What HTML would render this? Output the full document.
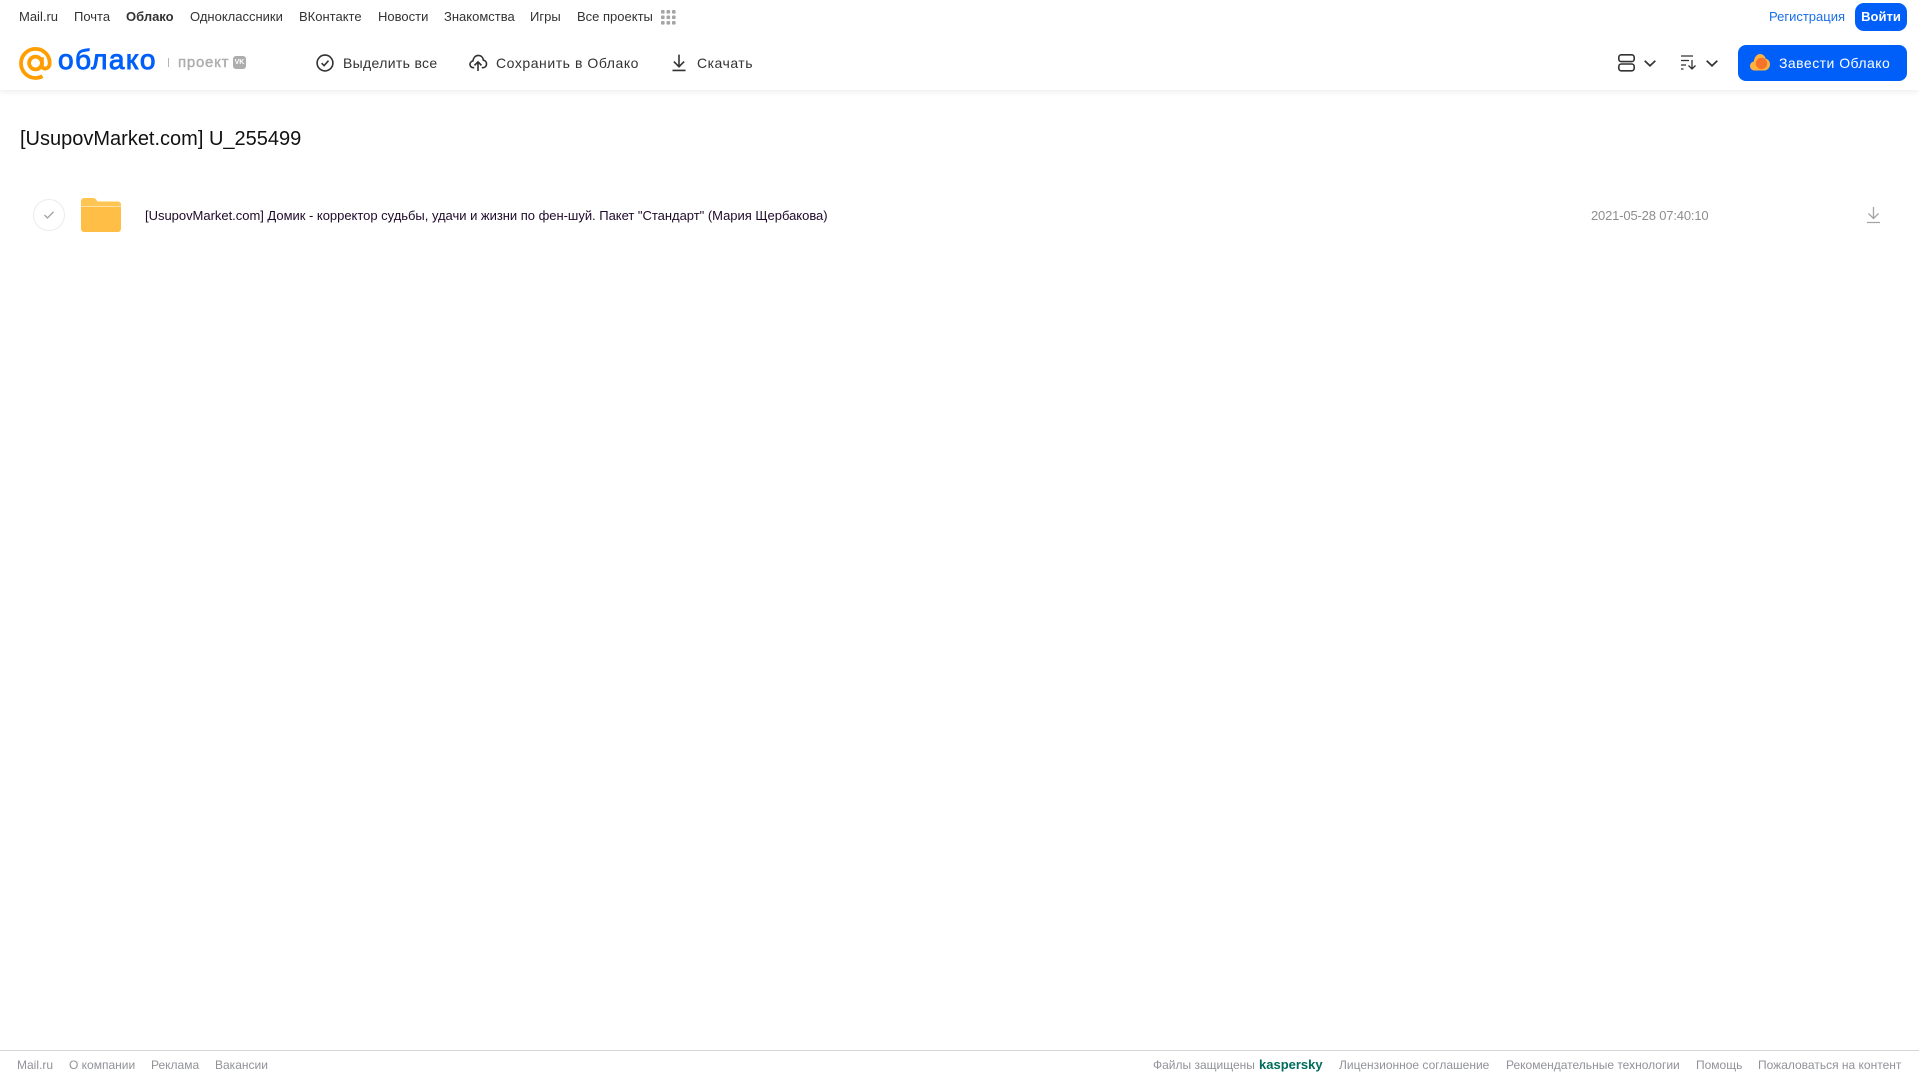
<!DOCTYPE html>
<html lang="ru"><head><meta charset="utf-8"><title>Облако</title>
<style>
html,body{margin:0;padding:0;background:#fff;width:1919px;height:1079px;overflow:hidden;font-family:"Liberation Sans",sans-serif}
.t{position:absolute;white-space:nowrap;line-height:18px}
.n{top:8px;font-size:13px;color:#333}
.h{top:54px;font-size:14px;color:#333;letter-spacing:.55px;line-height:18px}
.f{top:1056px;font-size:12px;color:#919399}
svg{position:absolute;overflow:visible}
#hdr{position:absolute;left:0;top:0;width:1919px;height:90px;background:#fff;box-shadow:0 1px 6px rgba(0,0,0,.09)}
</style></head><body>
<div id="hdr"></div>
<span class="t n" style="left:19px">Mail.ru</span>
<span class="t n" style="left:74px">Почта</span>
<span class="t n" style="left:126px;font-weight:bold">Облако</span>
<span class="t n" style="left:190px">Одноклассники</span>
<span class="t n" style="left:299px">ВКонтакте</span>
<span class="t n" style="left:378px">Новости</span>
<span class="t n" style="left:444px">Знакомства</span>
<span class="t n" style="left:530px">Игры</span>
<span class="t n" style="left:577px">Все проекты</span>
<svg style="left:661px;top:10px" width="15" height="15" fill="#a5a5a5"><rect x="0" y="0" width="3.6" height="3.6" rx="1"/><rect x="5.5" y="0" width="3.6" height="3.6" rx="1"/><rect x="11" y="0" width="3.6" height="3.6" rx="1"/><rect x="0" y="5.5" width="3.6" height="3.6" rx="1"/><rect x="5.5" y="5.5" width="3.6" height="3.6" rx="1"/><rect x="11" y="5.5" width="3.6" height="3.6" rx="1"/><rect x="0" y="11" width="3.6" height="3.6" rx="1"/><rect x="5.5" y="11" width="3.6" height="3.6" rx="1"/><rect x="11" y="11" width="3.6" height="3.6" rx="1"/></svg>
<span class="t" style="left:1769px;top:8px;font-size:13px;color:#1a6fe8">Регистрация</span>
<div style="position:absolute;left:1855px;top:3px;width:52px;height:28px;border-radius:9px;background:#005ff9;color:#fff;font-size:13px;font-weight:bold;text-align:center;line-height:28px">Войти</div>

<svg style="left:19px;top:47px" width="33" height="33" viewBox="0 0 33 33" fill="none" stroke="#ff9e00" stroke-width="3.8"><circle cx="16.5" cy="16" r="6.4"/><path d="M22.9 10.2v8.3c0 4.4 7.8 4.4 7.8-2.5C30.700 8 24.300 1.900 16.500 1.900 8.500 1.900 2 8.300 2 16.300c0 8.200 6.500 14.700 14.500 14.700 2.600 0 4.900-.6 7-1.800"/></svg>
<span class="t" style="left:58px;top:41px;font-size:28px;line-height:38px;color:#005ff9;-webkit-text-stroke:.9px #005ff9;letter-spacing:1.4px">облако</span>
<div style="position:absolute;left:168px;top:58px;width:1px;height:9px;background:#b5b5b5"></div>
<span class="t" style="left:178px;top:54px;font-size:15px;color:#adadad;-webkit-text-stroke:.4px #adadad;letter-spacing:.75px">проект</span>
<div style="position:absolute;left:233px;top:56px;width:13px;height:13px;border-radius:3px;background:#adadad;color:#fff;font-size:7px;font-weight:bold;line-height:13px;text-align:center">VK</div>

<svg style="left:316px;top:54px" width="18" height="18" viewBox="0 0 18 18" fill="none" stroke="#333" stroke-width="1.6"><circle cx="9" cy="9" r="7.9"/><path d="M5.600 9.200l2.500 2.400 4.400-4.900"/></svg>
<span class="t h" style="left:343px;letter-spacing:.33px">Выделить все</span>
<svg style="left:469px;top:54px" width="18" height="18" viewBox="0 0 19 18" fill="none" stroke="#333" stroke-width="1.7"><path d="M5.500 14H4.700C2.600 14 1 12.400 1 10.500 1 8.700 2.300 7.300 4 7 4.600 3.800 6.500 1 9.800 1c3 0 5 2.200 5.400 5 2 .3 3.300 2 3.300 4 0 2.200-1.600 4-3.800 4h-1.200"/><path d="M9.500 17.500V8M5.800 11.500l3.700-3.700 3.700 3.700"/></svg>
<span class="t h" style="left:496px">Сохранить в Облако</span>
<svg style="left:672px;top:54px" width="14" height="18" viewBox="0 0 15 18" fill="none" stroke="#333" stroke-width="1.700"><path d="M7.500 0v12.500M2 7.500l5.500 5.500L13 7.500M.5 17h14"/></svg>
<span class="t h" style="left:697px;letter-spacing:.5px">Скачать</span>

<svg style="left:1618px;top:54px" width="17" height="18" viewBox="0 0 17 18" fill="none" stroke="#333" stroke-width="1.600"><rect x=".8" y=".8" width="15.400" height="6.800" rx="2.500"/><rect x=".8" y="10" width="15.400" height="6.800" rx="2.500"/></svg>
<svg style="left:1644px;top:60px" width="12" height="7" fill="none" stroke="#333" stroke-width="1.700"><path d="M.7.800L6 5.800l5.300-5"/></svg>
<svg style="left:1681px;top:55px" width="16" height="15" viewBox="0 0 16 15" fill="none" stroke="#333" stroke-width="1.300"><path d="M0 1h12M0 5.500h8M0 10h5M0 14h2.500M11 5v9M7.500 10.500l3.500 3.500 3.500-3.500"/></svg>
<svg style="left:1706px;top:60px" width="12" height="7" fill="none" stroke="#333" stroke-width="1.700"><path d="M.7.800L6 5.800l5.300-5"/></svg>
<div style="position:absolute;left:1738px;top:45px;width:169px;height:36px;border-radius:8px;background:#005ff9"></div>
<svg style="left:1750px;top:54px" width="20" height="17" viewBox="0 0 20 17"><path d="M4.500 16.500C2 16.500 0 14.500 0 12c0-2.300 1.600-4.100 3.700-4.400C4.400 3.200 6.800 0 10 0c2.800 0 5 2 5.700 4.800 2.500.4 4.300 2.700 4.300 5.500 0 3.400-2.500 6.200-5.700 6.200z" fill="#ffb23e"/><circle cx="11.500" cy="9.500" r="5.700" fill="#f5742a"/></svg>
<span class="t h" style="left:1779px;color:#fff;letter-spacing:.47px">Завести Облако</span>

<span class="t" style="left:20px;top:126px;font-size:20px;line-height:26px;color:#111">[UsupovMarket.com] U_255499</span>

<div style="position:absolute;left:33px;top:199px;width:30px;height:30px;border:1px solid #ececec;border-radius:50%"></div>
<svg style="left:44px;top:211px" width="10" height="8" fill="none" stroke="#a0a0a0" stroke-width="1.300"><path d="M.5 4l3 3L9.500.8"/></svg>
<svg style="left:81px;top:198px" width="40" height="34" viewBox="0 0 40 34"><path d="M0 3a3 3 0 0 1 3-3h9c2 0 3 1 4.500 3.500H37a3 3 0 0 1 3 3V8H0z" fill="#ffc552"/><path d="M0 8.500h40V31a3 3 0 0 1-3 3H3a3 3 0 0 1-3-3z" fill="#ffbf47"/></svg>
<span class="t" style="left:145px;top:207px;font-size:13px;letter-spacing:-.02px;color:#1f0a2a">[UsupovMarket.com] Домик - корректор судьбы, удачи и жизни по фен-шуй. Пакет "Стандарт" (Мария Щербакова)</span>
<span class="t" style="left:1591px;top:207px;font-size:13px;letter-spacing:-.17px;color:#8e8e8e">2021-05-28 07:40:10</span>
<svg style="left:1867px;top:207px" width="13" height="17" viewBox="0 0 13 17" fill="none" stroke="#a3a3a3" stroke-width="1.300"><path d="M6.500 0v11.500M1.500 6.500l5 5 5-5M0 15.500h13"/></svg>

<div style="position:absolute;left:0;top:1050px;width:1919px;height:1px;background:#d6d6d6"></div>
<span class="t f" style="left:17px">Mail.ru</span>
<span class="t f" style="left:69px">О компании</span>
<span class="t f" style="left:151px">Реклама</span>
<span class="t f" style="left:215px">Вакансии</span>
<span class="t f" style="left:1153px">Файлы защищены</span>
<span class="t f" style="left:1259px;font-weight:bold;color:#006d5c;font-size:13px">kaspersky</span>
<span class="t f" style="left:1339px">Лицензионное соглашение</span>
<span class="t f" style="left:1506px">Рекомендательные технологии</span>
<span class="t f" style="left:1696px">Помощь</span>
<span class="t f" style="left:1758px">Пожаловаться на контент</span>
</body></html>
